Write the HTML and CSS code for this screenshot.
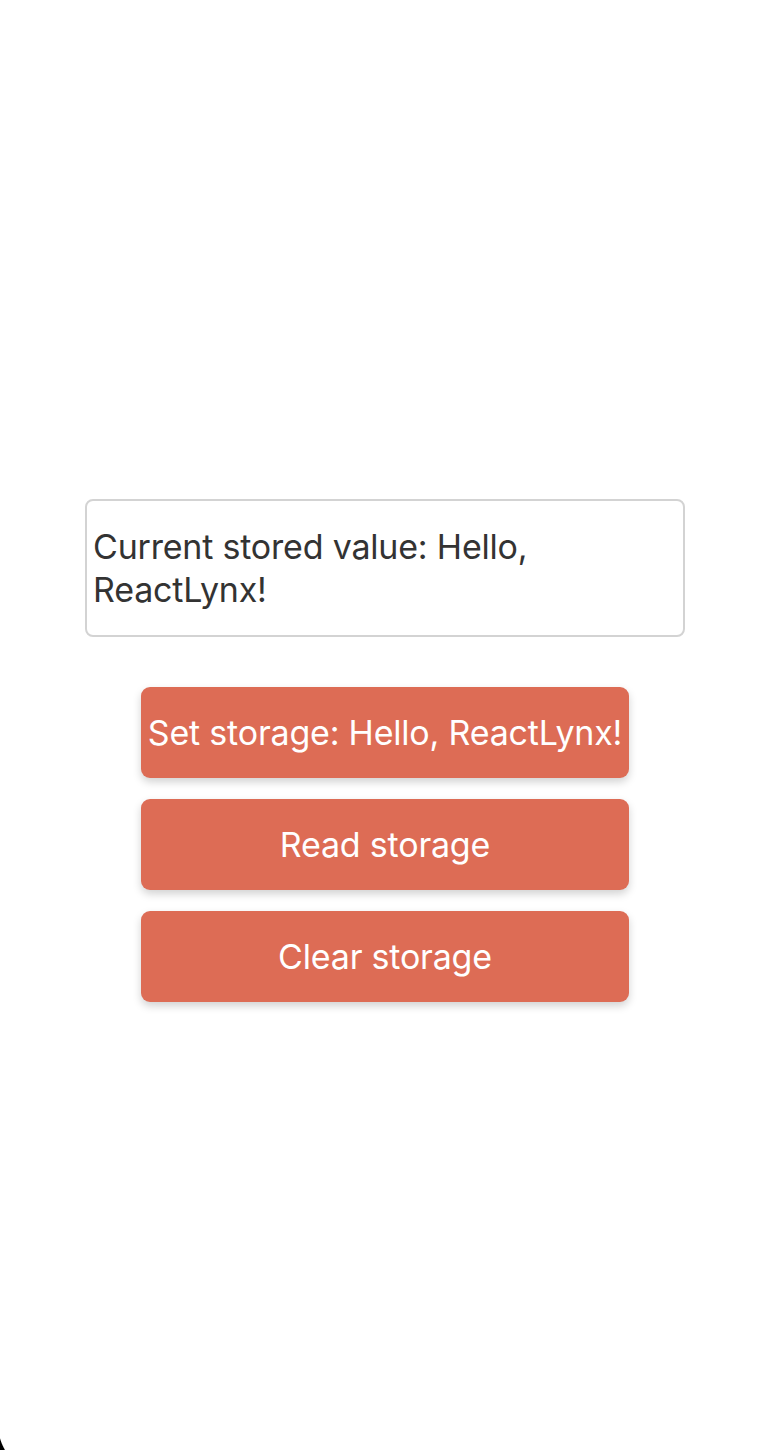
FILE: index.html
```html
<!DOCTYPE html>
<html>
<head>
<meta charset="utf-8">
<link rel="stylesheet" href="styles.css">
</head>
<body>
<div class="screen">
  <div class="content">
    <div class="value-box"><span class="value-text">Current stored value: Hello, ReactLynx!</span></div>
    <div class="buttons">
      <div class="btn">Set storage: Hello, ReactLynx!</div>
      <div class="btn">Read storage</div>
      <div class="btn">Clear storage</div>
    </div>
  </div>
  <div class="corner"></div>
</div>
</body>
</html>
```

FILE: styles.css
```css
html, body {
  margin: 0;
  padding: 0;
  background: #ffffff;
}
.screen {
  position: relative;
  width: 762px;
  height: 1450px;
  overflow: hidden;
  font-family: Inter, "Noto Sans", sans-serif;
}
.content {
  display: flex;
  flex-direction: column;
  align-items: center;
  padding-top: 499px;
  padding-left: 8px;
}
.value-box {
  box-sizing: border-box;
  width: 600px;
  height: 138px;
  border: 2px solid #d3d3d3;
  border-radius: 8px;
  padding: 0 6px;
  display: flex;
  align-items: center;
  font-size: 34px;
  line-height: 43px;
  color: #333333;
  letter-spacing: -0.2px;
}
.buttons {
  display: flex;
  flex-direction: column;
  gap: 21px;
  margin-top: 50px;
}
.btn {
  box-sizing: border-box;
  width: 488px;
  height: 91px;
  background: #dd6c55;
  border-radius: 9px;
  color: #ffffff;
  font-size: 34px;
  letter-spacing: -0.2px;
  display: flex;
  align-items: center;
  justify-content: center;
  white-space: nowrap;
  box-shadow: 0 4px 8px rgba(0, 0, 0, 0.18);
}
.corner {
  position: absolute;
  left: 0;
  bottom: 0;
  width: 10px;
  height: 16px;
  background: radial-gradient(circle at 50px -10px, transparent 51.5px, #000 52.5px);
}
```
